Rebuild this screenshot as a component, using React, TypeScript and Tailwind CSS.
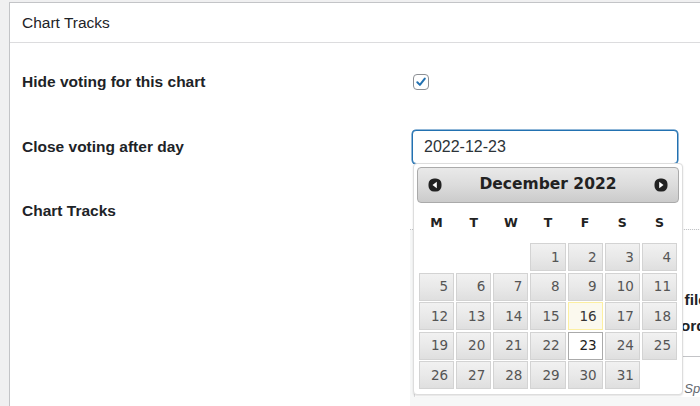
import React from "react";

const weeks: (number | null)[][] = [
  [null, null, null, 1, 2, 3, 4],
  [5, 6, 7, 8, 9, 10, 11],
  [12, 13, 14, 15, 16, 17, 18],
  [19, 20, 21, 22, 23, 24, 25],
  [26, 27, 28, 29, 30, 31, null],
];

function NavIcon({ dir }: { dir: "prev" | "next" }) {
  return (
    <svg width="14" height="14" viewBox="0 0 14 14">
      <rect x="0.5" y="0.5" width="13" height="13" rx="5.5" fill="#222" />
      {dir === "prev" ? (
        <path d="M4.5 7 L8.8 3.8 L8.8 10.2 Z" fill="#fff" />
      ) : (
        <path d="M9.5 7 L5.2 3.8 L5.2 10.2 Z" fill="#fff" />
      )}
    </svg>
  );
}

function DatePicker() {
  return (
    <div className="absolute left-[1px] top-[33px] w-[270px] h-[232px] bg-white border border-[#dddddd] rounded-[4px] shadow-[0_1px_2px_rgba(0,0,0,0.12)] px-[3px] pt-[3px] font-['DejaVu_Sans',Verdana,sans-serif]">
      <div className="h-[36px] flex items-center justify-between px-[10px] rounded-[4px] border border-[#aaaaaa] bg-[linear-gradient(to_bottom,#e9e9e9_0%,#dcdcdc_50%,#cbcbcb_100%)]">
        <NavIcon dir="prev" />
        <span className="text-[15.5px] font-bold text-[#222]">December 2022</span>
        <NavIcon dir="next" />
      </div>
      <div className="pl-[2px] pr-[2px]">
        <div className="grid grid-cols-7 gap-x-[2px] h-[40px] items-center text-[12.5px] font-bold text-[#222]">
          {["M", "T", "W", "T", "F", "S", "S"].map((d, i) => (
            <div key={i} className="text-center">{d}</div>
          ))}
        </div>
        <div className="grid grid-cols-7 gap-x-[2px] gap-y-[1.5px]">
          {weeks.flat().map((d, i) => {
            if (d === null) return <div key={i} className="h-[28px]" />;
            const style =
              d === 23
                ? "bg-white border-[#aaaaaa] text-[#212121]"
                : d === 16
                ? "bg-[#fbf9ee] border-[#fcefa1] text-[#363636]"
                : "bg-[linear-gradient(to_bottom,#f1f1f1_0%,#e9e9e9_50%,#dfdfdf_100%)] border-[#d3d3d3] text-[#555555]";
            return (
              <div
                key={i}
                className={`h-[28px] border flex items-center justify-end pr-[5px] text-[13.5px] ${style}`}
              >
                {d}
              </div>
            );
          })}
        </div>
      </div>
    </div>
  );
}

export default function App() {
  return (
    <div className="w-[700px] h-[406px] overflow-hidden bg-[#f0f0f1] pl-[9px] pt-[2px] font-['Liberation_Sans',Arial,sans-serif] text-[#1d2327]">
      <div className="h-[420px] w-[720px] bg-white border-l border-t border-[#c3c4c7]">
        <div className="h-[40px] border-b border-[#dcdcde] flex items-center pl-[12px] text-[15.5px]">
          Chart Tracks
        </div>

        <div className="pl-[12px]">
          <div className="mt-[22px] flex h-[34px] items-center">
            <div className="w-[390px] text-[15.5px] font-bold">Hide voting for this chart</div>
            <div className="w-[16px] h-[16px] ml-[1px] rounded-[4px] border border-[#8c8f94] bg-white flex items-center justify-center">
              <svg width="12" height="12" viewBox="0 0 12 12">
                <path d="M2.3 6.3 L4.9 8.9 L9.8 2.6" stroke="#2271b1" strokeWidth="2" fill="none" strokeLinecap="round" strokeLinejoin="round" />
              </svg>
            </div>
          </div>

          <div className="mt-[31px] flex h-[34px] items-center">
            <div className="w-[390px] text-[15.5px] font-bold">Close voting after day</div>
            <div className="relative">
              <div className="w-[266px] h-[34px] rounded-[4px] border border-[#2271b1] shadow-[0_0_0_0.5px_#2271b1] bg-white flex items-center pl-[11px] text-[16px] text-[#2c3338]">
                2022-12-23
              </div>
              <DatePicker />
            </div>
          </div>

          <div className="mt-[37px] flex">
            <div className="w-[390px] text-[15.5px] font-bold leading-[20px]">Chart Tracks</div>
            <div className="mt-[28px] w-[320px] h-[200px] bg-[#f6f7f7] border-t border-dotted border-[#c3c4c7] pl-[4px]">
              <div className="bg-white h-[167px] border-l border-[#dcdcde]">
                <div className="h-[127px] border-b border-[#c3c4c7] pt-[57px] text-[15.5px] font-bold leading-[26px] whitespace-nowrap">
                  <div className="pl-[221px]">Audio file</div>
                  <div className="pl-[237px]">Record</div>
                </div>
                <div className="pt-[24px] pl-[269px] text-[13px] italic text-[#646970] leading-[16px] whitespace-nowrap">
                  Spotify
                </div>
              </div>
            </div>
          </div>
        </div>
      </div>
    </div>
  );
}
